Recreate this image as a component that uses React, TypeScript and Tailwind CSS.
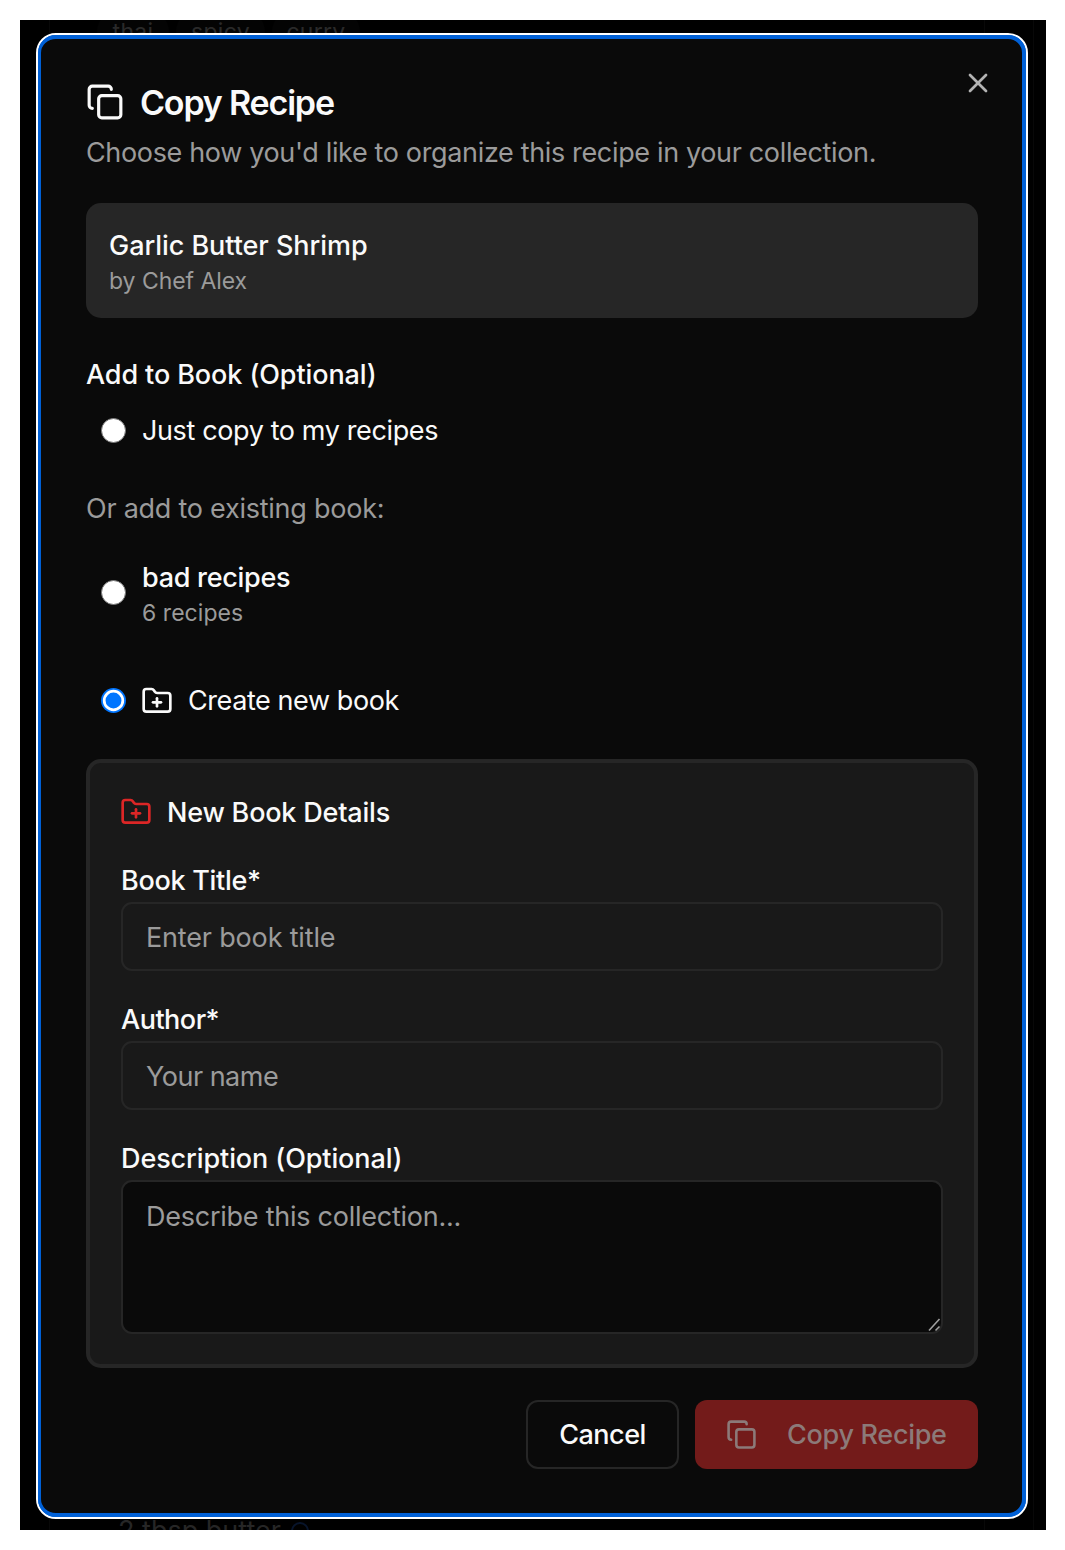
import React from "react";
import { Copy, FolderPlus, X } from "lucide-react";

const tags = [
  { name: "thai", cls: "w-[72px]" },
  { name: "spicy", cls: "w-[89px]" },
  { name: "curry", cls: "w-[88px]" },
];

function Radio({ checked = false }: { checked?: boolean }) {
  return checked ? (
    <svg className="mb-[2px] size-[25px] shrink-0" viewBox="0 0 25 25">
      <circle cx="12.5" cy="12.5" r="12.500" fill="#0075ff" />
      <circle cx="12.5" cy="12.5" r="9.300" fill="#0075ff" stroke="#fff" strokeWidth="2.700" />
    </svg>
  ) : (
    <span className="mb-[2px] size-[25px] shrink-0 rounded-full border border-[#767676] bg-white" />
  );
}

function Field({ label, placeholder, labelCls, textCls }: { label: string; placeholder: string; labelCls: string; textCls: string }) {
  return (
    <label className="mb-[27px] block">
      <span className={"block h-[43px] pt-[6px] text-[27px] leading-[32px] font-medium " + labelCls}>{label}</span>
      <span className={"flex h-[69px] items-center rounded-[11px] border-2 border-[#262626] px-[23px] pt-[3px] text-[27px] text-[#9b9b9b] " + textCls}>
        {placeholder}
      </span>
    </label>
  );
}

export default function App() {
  return (
    <div className="h-[1550px] w-[1065px] bg-white pt-[20px] pl-[20px] font-['Inter','Liberation_Sans',sans-serif] text-[#fafafa]">
      <div className="relative h-[1510px] w-[1025.5px] overflow-hidden bg-black pt-[13px] pl-[16px]">
        <div className="absolute inset-y-0 left-[29px] w-[936px] border-x border-[#080808]" />
        <div className="absolute inset-y-0 left-[1013px] w-px bg-[#080808]" />
        <div className="absolute top-[-10px] left-[77px] flex gap-[7px]">
          {tags.map((t) => (
            <span key={t.name} className={"flex h-[44px] items-center justify-center rounded-full bg-[#040404] text-[23px] tracking-[0.3px] text-[#2a2a2a] " + t.cls}>
              {t.name}
            </span>
          ))}
        </div>
        <div className="absolute top-[1495px] left-[98px] flex items-center gap-[10px] text-[27px] leading-[32px] text-[#262626]">
          <span>2 tbsp butter</span>
          <span className="size-[18px] rounded-full border-2 border-[#07142b]" />
        </div>

        <div role="dialog" className="relative h-[1486px] w-[992px] rounded-[20px] border-2 border-white bg-[#0060d6]">
          <div className="h-full rounded-[18px] border-4 border-l-[3px] border-[#0060d6] bg-[#0a0a0a] pt-[45px] pr-[44px] pl-[45px]">
            <button aria-label="Close" className="absolute top-[32px] right-[32px] text-[#b3b3b3]">
              <X className="size-[32px]" strokeWidth={2} />
            </button>
            <header>
              <h1 className="flex h-[39px] items-center gap-[16px] text-[34px] leading-[39px] font-semibold tracking-[-1.18px]">
                <Copy className="mb-[3px] size-[38px]" strokeWidth={2} />
                <span className="-mt-[3px]">Copy Recipe</span>
              </h1>
              <p className="mt-[13px] h-[34px] text-[27px] leading-[34px] tracking-[-0.35px] text-[#9b9b9b]">
                Choose how you'd like to organize this recipe in your collection.
              </p>
            </header>

            <section className="mt-[33px] h-[115px] rounded-[15px] bg-[#262626] px-[23px] pt-[25px]">
              <h2 className="text-[27px] leading-[36px] font-medium tracking-[-0.05px]">Garlic Butter Shrimp</h2>
              <p className="text-[23px] leading-[35px] tracking-[-0.05px] text-[#9b9b9b]">by Chef Alex</p>
            </section>

            <section className="pt-[39px]">
              <h2 className="text-[27px] leading-[36px] font-medium tracking-[-0.1px]">Add to Book (Optional)</h2>
              <div className="mt-[20px] flex h-[36px] items-center gap-[16px] pl-[15px] text-[27px] tracking-[-0.38px]">
                <Radio />
                <span className="pt-px">Just copy to my recipes</span>
              </div>
              <p className="mt-[42px] text-[27px] leading-[36px] tracking-[-0.25px] text-[#9b9b9b]">Or add to existing book:</p>
              <div className="mt-[30px] flex h-[72px] items-center gap-[16px] pl-[15px]">
                <Radio />
                <div className="pt-[5px]">
                  <p className="text-[27px] leading-[36px] font-medium tracking-[-0.28px]">bad recipes</p>
                  <p className="text-[23px] leading-[35px] tracking-[0.05px] text-[#9b9b9b]">6 recipes</p>
                </div>
              </div>
              <div className="mt-[54px] flex h-[36px] items-center pl-[15px] text-[27px] tracking-[-0.42px]">
                <Radio checked />
                <FolderPlus className="ml-[15px] size-[32px]" strokeWidth={2} />
                <span className="ml-[15px] pt-px">Create new book</span>
              </div>
            </section>

            <section className="mt-[40px] h-[609px] rounded-[15px] border-4 border-[#262626] bg-[#191919] px-[31px] pt-[32px]">
              <h2 className="mb-[28px] flex h-[36px] items-center gap-[15px] text-[27px] font-medium tracking-[-0.2px]">
                <FolderPlus className="mb-[2px] -ml-px size-[32px] text-[#dc2626]" strokeWidth={2} />
                <span className="pt-px">New Book Details</span>
              </h2>
              <Field label="Book Title*" placeholder="Enter book title" labelCls="tracking-[-0.3px]" textCls="tracking-[-0.17px]" />
              <Field label="Author*" placeholder="Your name" labelCls="tracking-[-0.5px]" textCls="tracking-[-0.5px]" />
              <label className="block">
                <span className="block h-[43px] pt-[6px] text-[27px] leading-[32px] font-medium tracking-[-0.1px]">Description (Optional)</span>
                <span className="relative block h-[154px] rounded-[11px] border-2 border-[#262626] bg-[#0a0a0a] px-[23px] pt-[17px] text-[27px] leading-[36px] tracking-[-0.25px] text-[#9b9b9b]">
                  Describe this collection...
                  <svg className="absolute right-0 bottom-0 size-[14px]" viewBox="0 0 14 14" fill="none" stroke="#a0a0a0" strokeWidth="1.6">
                    <path d="M2 12.500 12.500 1M8.500 12.500 12.500 8.500" />
                  </svg>
                </span>
              </label>
            </section>

            <footer className="mt-[32px] flex h-[69px] justify-end gap-[16px] text-[27px] font-medium">
              <button className="w-[153px] rounded-[12px] border-2 border-[#262626] pt-[2px] tracking-[-0.5px]">Cancel</button>
              <button className="flex w-[283px] items-center rounded-[12px] bg-[#731b1a] pl-[31px] tracking-[-0.3px] text-[#8c7a79]">
                <Copy className="size-[31px]" strokeWidth={2} />
                <span className="ml-[30px] pt-[2px]">Copy Recipe</span>
              </button>
            </footer>
          </div>
        </div>
      </div>
    </div>
  );
}
